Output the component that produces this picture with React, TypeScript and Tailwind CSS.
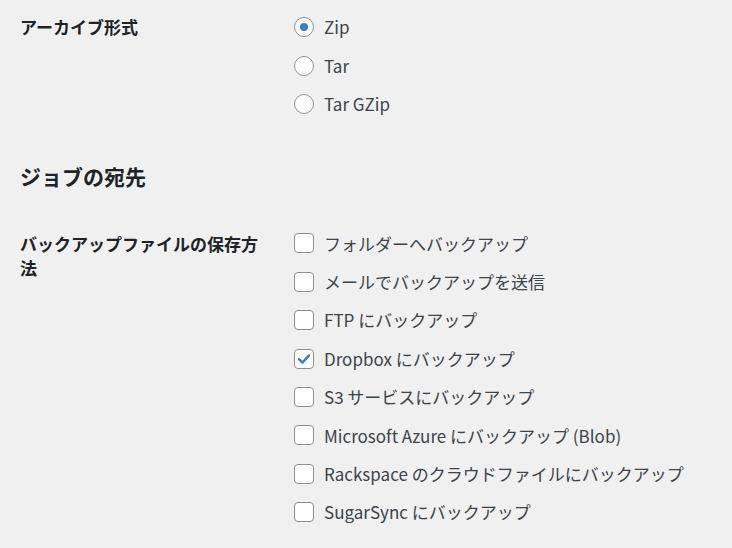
const formats = [
  { label: "Zip", checked: true },
  { label: "Tar", checked: false },
  { label: "Tar GZip", checked: false },
];

const destinations = [
  { label: "フォルダーへバックアップ", checked: false },
  { label: "メールでバックアップを送信", checked: false },
  { label: "FTP にバックアップ", checked: false },
  { label: "Dropbox にバックアップ", checked: true },
  { label: "S3 サービスにバックアップ", checked: false },
  { label: "Microsoft Azure にバックアップ (Blob)", checked: false },
  { label: "Rackspace のクラウドファイルにバックアップ", checked: false },
  { label: "SugarSync にバックアップ", checked: false },
];

function Radio({ checked }: { checked: boolean }) {
  return (
    <span className="w-5 h-5 shrink-0 rounded-full border border-[#8c8f94] bg-white flex items-center justify-center">
      {checked && <span className="w-2 h-2 rounded-full bg-[#3582c4]" />}
    </span>
  );
}

function Checkbox({ checked }: { checked: boolean }) {
  return (
    <span className="w-5 h-5 shrink-0 rounded-[4px] border border-[#8c8f94] bg-white flex items-center justify-center">
      {checked && (
        <svg width="16" height="16" viewBox="0 0 16 16">
          <path d="M3 8.2 L6.4 11.6 L13 4.4" fill="none" stroke="#3582c4" strokeWidth="2.4" strokeLinecap="round" strokeLinejoin="round" />
        </svg>
      )}
    </span>
  );
}

export default function App() {
  return (
    <div
      className="w-[732px] h-[548px] overflow-hidden bg-[#f0f0f1] pt-2 text-[17px] text-[#3c434a]"
      style={{ fontFamily: '"Noto Sans CJK JP", "Noto Sans", sans-serif' }}
    >
      <div className="flex">
        <div className="w-[294px] shrink-0 pl-5 pr-[26px] pt-[7px] leading-6 font-bold text-[#1d2327]">アーカイブ形式</div>
        <ul>
          {formats.map((f) => (
            <li key={f.label} className="h-[38.4px] flex items-center gap-[10px]">
              <Radio checked={f.checked} />
              <span>{f.label}</span>
            </li>
          ))}
        </ul>
      </div>

      <h2 className="mt-[39px] pl-5 text-[21px] leading-7 font-bold text-[#1d2327]">ジョブの宛先</h2>

      <div className="flex mt-[34px]">
        <div className="w-[294px] shrink-0 pl-5 pr-[26px] pt-[8px] leading-6 font-bold text-[#1d2327]">
          バックアップファイルの保存方法
        </div>
        <ul>
          {destinations.map((d) => (
            <li key={d.label} className="h-[38.4px] flex items-center gap-[10px] whitespace-nowrap">
              <Checkbox checked={d.checked} />
              <span>{d.label}</span>
            </li>
          ))}
        </ul>
      </div>
    </div>
  );
}
